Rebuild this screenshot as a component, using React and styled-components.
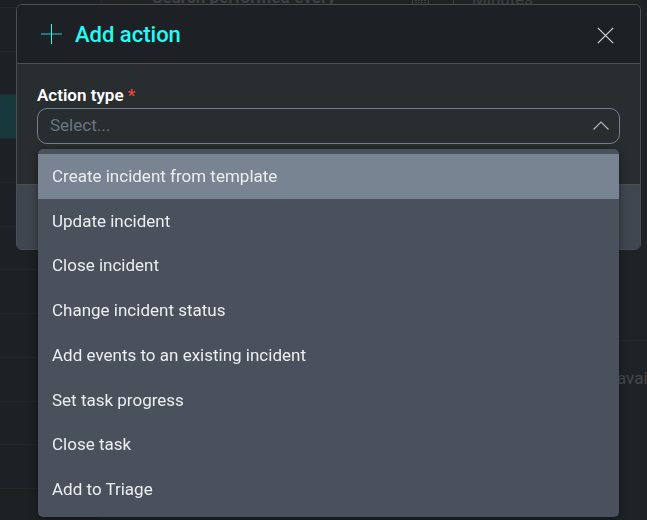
import React, { useState } from "react";
import styled, { createGlobalStyle } from "styled-components";

const GlobalStyle = createGlobalStyle`
  *, *::before, *::after { box-sizing: border-box; }
  html, body, #root { height: 100%; }
  body {
    margin: 0;
    overflow: hidden;
    background: #1e2124;
    color: #eceef0;
    font: 400 17px/20px Roboto, sans-serif;
  }
  button, input { font: inherit; color: inherit; }
`;

const Page = styled.div`
  display: grid;
  grid-template-columns: 100px 1fr;
  height: 100%;
  overflow: hidden;
`;

const Sidebar = styled.nav`
  display: grid;
  grid-template-rows: 8px repeat(11, 1fr);
  height: 489px;
  background: #1d2024;
`;

const SidebarRow = styled.div`
  border-bottom: 1px solid #23272a;
  background: ${({ $active }) => ($active ? "#18393b" : "transparent")};
`;

const Main = styled.main`
  display: flex;
  flex-direction: column;
  min-width: 0;
  border-left: 1px solid #262a2e;
  background: #1f2326;
`;

const Schedule = styled.div`
  display: flex;
  align-items: flex-start;
  height: 341px;
  padding-left: 51px;
  border-bottom: 1px solid #272b2e;
  color: #3d4144;
`;

const ScheduleLabel = styled.span`
  width: 260px;
  margin-top: -13px;
  font-weight: 700;
`;

const ScheduleUnit = styled.span`
  margin: -11px 0 0 18px;
`;

const Divider = styled.span`
  width: 1px;
  height: 7px;
  margin-left: 24px;
  background: #3d4144;
`;

const Notice = styled.p`
  margin: 27px 0 0 auto;
  width: 30px;
  white-space: nowrap;
  color: #45494c;
`;

const Dialog = styled.section`
  position: fixed;
  inset: 4px 6px auto 16px;
  border: 1px solid #4b4f52;
  border-radius: 6px;
  background: #282d30;
`;

const Header = styled.header`
  display: flex;
  align-items: center;
  height: 59px;
  padding: 0 26px 0 24px;
  border-bottom: 1px solid #4b4f52;
  border-radius: 5px 5px 0 0;
  background: #1d2024;
`;

const Title = styled.h1`
  flex: 1;
  margin: 0 0 0 13px;
  padding-top: 2px;
  color: #22fcf5;
  font-size: 22px;
  font-weight: 500;
  line-height: 28px;
`;

const CloseButton = styled.button`
  display: flex;
  padding: 2px 0 0;
  border: 0;
  background: none;
  cursor: pointer;
`;

const Body = styled.div`
  height: 121px;
  padding: 21px 20px 0;
  border-bottom: 1px solid #4b4f52;
`;

const Label = styled.label`
  display: block;
  margin-bottom: 2px;
  color: #fff;
  font-weight: 600;
  line-height: 21px;
`;

const Required = styled.span`
  color: #f0443f;
`;

const Field = styled.div`
  position: relative;
`;

const Combo = styled.div`
  display: flex;
  align-items: center;
  height: 36px;
  padding: 0 10px 0 12px;
  border: 1px solid #748092;
  border-radius: 10px;
`;

const ComboInput = styled.input`
  flex: 1;
  min-width: 0;
  padding: 0 0 2px;
  border: 0;
  outline: 0;
  background: none;
  &::placeholder { color: #6b7584; opacity: 1; }
`;

const Menu = styled.ul`
  position: absolute;
  top: 41px;
  left: 1px;
  right: 1px;
  display: grid;
  grid-auto-rows: 1fr;
  height: 368px;
  margin: 0;
  padding: 5px 0;
  border-radius: 5px;
  background: #4a515d;
  box-shadow: 0 2px 8px rgba(0, 0, 0, 0.4);
  list-style: none;
`;

const Option = styled.li`
  display: flex;
  align-items: center;
  padding: 0 14px 1px;
  background: ${({ $active }) => ($active ? "#798493" : "transparent")};
  cursor: pointer;
`;

const Footer = styled.footer`
  height: 64px;
  border-radius: 0 0 5px 5px;
  background: #40464f;
`;

const actions = [
  "Create incident from template",
  "Update incident",
  "Close incident",
  "Change incident status",
  "Add events to an existing incident",
  "Set task progress",
  "Close task",
  "Add to Triage",
];

const PlusIcon = () => (
  <svg width="21" height="21" fill="none" stroke="#22fcf5" aria-hidden="true">
    <path d="M10.5 0v20" />
    <path d="M0 10h21" opacity="0.8" />
  </svg>
);

const CloseIcon = () => (
  <svg width="17" height="17" fill="none" stroke="#d5d8da" strokeWidth="1.2" aria-hidden="true">
    <path d="M.8.8l15.400 15.400M16.200.8l-15.400 15.400" />
  </svg>
);

const ChevronIcon = () => (
  <svg width="16" height="10" fill="none" stroke="#b3b8bd" strokeWidth="1.2" aria-hidden="true">
    <path d="M.5 8.500L8 1l7.500 7.500" />
  </svg>
);

const CalendarIcon = () => (
  <svg width="17" height="5" fill="none" stroke="#3d4144" aria-hidden="true">
    <path d="M.5 0v4.500h16V0" />
    <path d="M3 .5h11M3 2.500h11" strokeDasharray="2 1" />
  </svg>
);

export default function App() {
  const [active, setActive] = useState(0);
  return (
    <>
      <GlobalStyle />
      <Page>
        <Sidebar>
          {Array.from({ length: 12 }, (_, i) => (
            <SidebarRow key={i} $active={i === 3} />
          ))}
        </Sidebar>
        <Main>
          <Schedule>
            <ScheduleLabel>Search performed every</ScheduleLabel>
            <CalendarIcon />
            <Divider />
            <ScheduleUnit>Minutes</ScheduleUnit>
          </Schedule>
          <Notice>available</Notice>
        </Main>
      </Page>
      <Dialog role="dialog" aria-labelledby="dialog-title">
        <Header>
          <PlusIcon />
          <Title id="dialog-title">Add action</Title>
          <CloseButton type="button" aria-label="Close">
            <CloseIcon />
          </CloseButton>
        </Header>
        <Body>
          <Label htmlFor="action-type">
            Action type <Required>*</Required>
          </Label>
          <Field>
            <Combo>
              <ComboInput
                id="action-type"
                role="combobox"
                aria-expanded="true"
                aria-controls="action-options"
                placeholder="Select..."
                required
              />
              <ChevronIcon />
            </Combo>
            <Menu id="action-options" role="listbox">
              {actions.map((name, i) => (
                <Option
                  key={name}
                  role="option"
                  aria-selected={i === active}
                  $active={i === active}
                  onMouseEnter={() => setActive(i)}
                >
                  {name}
                </Option>
              ))}
            </Menu>
          </Field>
        </Body>
        <Footer />
      </Dialog>
    </>
  );
}
